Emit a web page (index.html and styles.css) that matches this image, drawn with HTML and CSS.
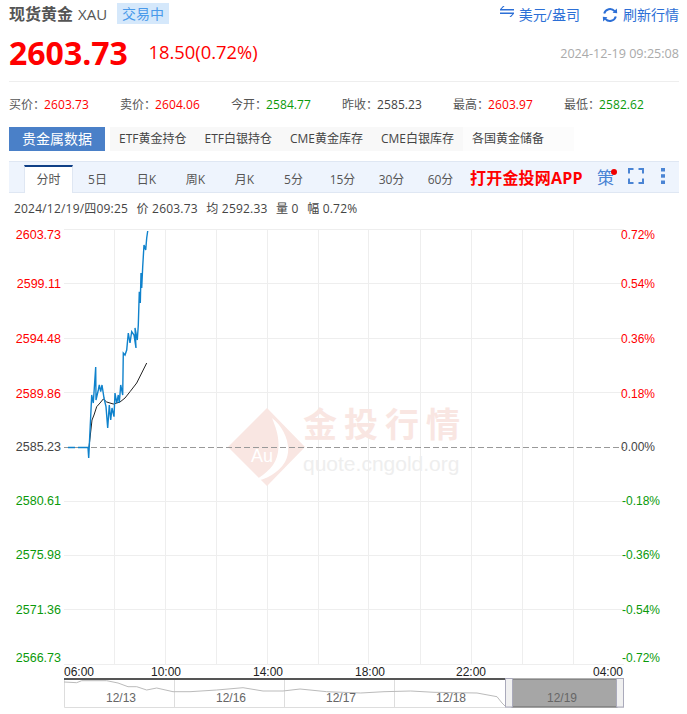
FILE: index.html
```html
<!DOCTYPE html>
<html lang="zh">
<head>
<meta charset="utf-8">
<title>现货黄金 XAU</title>
<link rel="stylesheet" href="styles.css">
</head>
<body>
<div class="page">
  <header class="head">
    <div class="title-row">
      <h1 class="name">现货黄金</h1><span class="code">XAU</span><span class="status">交易中</span>
      <div class="actions">
        <a class="action action-swap"><svg class="ic-swap" viewBox="0 0 14 11"><path d="M4.6 0 L1.6 3 H14 V4.6 H0 V3.2 L3 0 Z M0 6.4 H14 V7.8 L11 11 H9.4 L12.4 8 H0 Z" fill="#2c6fd6"/></svg>美元/盎司</a>
        <a class="action"><svg class="ic-refresh" viewBox="0 0 16 16"><path d="M2.2 6.5 A6 6 0 0 1 12.6 4.2 M13.8 9.5 A6 6 0 0 1 3.4 11.8" fill="none" stroke="#2c6fd6" stroke-width="2"/><path d="M10.6 5.8 L15.2 6.2 L14.8 1.6 Z M5.4 10.2 L0.8 9.8 L1.2 14.4 Z" fill="#2c6fd6"/></svg>刷新行情</a>
      </div>
    </div>
    <div class="price-row">
      <span class="price">2603.73</span><span class="change">18.50(0.72%)</span><time class="stamp">2024-12-19 09:25:08</time>
    </div>
  </header>
  <dl class="quotes">
    <div class="quote"><dt>买价：</dt><dd class="up">2603.73</dd></div>
    <div class="quote"><dt>卖价：</dt><dd class="up">2604.06</dd></div>
    <div class="quote"><dt>今开：</dt><dd class="down">2584.77</dd></div>
    <div class="quote"><dt>昨收：</dt><dd>2585.23</dd></div>
    <div class="quote"><dt>最高：</dt><dd class="up">2603.97</dd></div>
    <div class="quote"><dt>最低：</dt><dd class="down">2582.62</dd></div>
  </dl>
  <nav class="data-tabs">
    <span class="data-main">贵金属数据</span>
    <span class="data-tab">ETF黄金持仓</span>
    <span class="data-tab">ETF白银持仓</span>
    <span class="data-tab">CME黄金库存</span>
    <span class="data-tab">CME白银库存</span>
    <span class="data-tab data-last">各国黄金储备</span>
  </nav>
  <div class="period-bar">
    <span class="period active">分时</span>
    <span class="period">5日</span>
    <span class="period">日K</span>
    <span class="period">周K</span>
    <span class="period">月K</span>
    <span class="period">5分</span>
    <span class="period">15分</span>
    <span class="period">30分</span>
    <span class="period">60分</span>
    <span class="promo">打开金投网APP</span>
    <span class="tool-ce">策<i class="dot"></i></span>
    <svg class="ic-full" viewBox="0 0 16 16"><path d="M1 5.5 V1 H5.5 M10.5 1 H15 V5.5 M15 10.5 V15 H10.5 M5.5 15 H1 V10.5" fill="none" stroke="#4a84d4" stroke-width="2"/></svg>
    <svg class="ic-more" viewBox="0 0 4 16"><rect x="0" y="0" width="4" height="3.5" fill="#4a84d4"/><rect x="0" y="6.2" width="4" height="3.5" fill="#4a84d4"/><rect x="0" y="12.5" width="4" height="3.5" fill="#4a84d4"/></svg>
  </div>
  <div class="info-line">
    <span>2024/12/19/四09:25</span><span>价 2603.73</span><span>均 2592.33</span><span>量 0</span><span>幅 0.72%</span>
  </div>
  <svg class="chart" width="687" height="494" viewBox="0 220 687 494">
    <g class="grid">
      <path d="M64 229.5H624M64 283.5H624M64 338.5H624M64 392.5H624M64 501.5H624M64 555.5H624M64 609.5H624M64 664.5H624"/>
      <path d="M114.5 229V664M165.5 229V664M216.5 229V664M267.5 229V664M318.5 229V664M368.5 229V664M420.5 229V664M471.5 229V664M522.5 229V664M573.5 229V664"/>
    </g>
    <g class="mark">
      <path class="mark-d" d="M267 408 L305 447 L267 486 L228 447Z"/>
      <path class="mark-w" d="M272 418 C285 428 293 448 285 462 C278 474 264 480 252 482 C266 474 276 466 278 452 C280 438 276 428 272 418Z"/>
      <text class="mark-au" x="262" y="462">Au</text>
      <text class="mark-cn" x="303" y="437">金投行情</text>
      <text class="mark-en" x="303" y="471">quote.cngold.org</text>
    </g>
    <path class="zero" d="M64 447.5H624"/>
    <path class="avg" d="M89 447L92 420L94 415L96.7 406.7L100 403L103.3 399L106.7 402L113.3 404L120 402L125 398L130 391.7L136.7 383L141.7 373L146.7 363"/>
    <path class="line" d="M68 447.5H75M78 447.5H85M85 447.5H88L88.7 458L91 410L91.7 395L93.3 403L95.7 367L96 400L98.3 390L99.3 385L100.7 391.7L102 385L104 398L106 406.7L107.7 428L109.3 405L110.7 420L112 408L114 416.7L115 393L116.7 403L118.3 395L119.3 403L120.7 385L122.7 395L123.3 353L125 355L126.7 350L128.3 333L130 343L131.7 331.7L134 335L136 348L135 328L137.3 340L138.3 325L139.3 291.7L140.3 303L141 273L141.7 288L142.7 266.7L143.3 256.7L144 245L145.7 250L146.7 238L147.7 231"/>
    <g class="y-left">
      <text class="up" x="61" y="239">2603.73</text>
      <text class="up" x="61" y="288">2599.11</text>
      <text class="up" x="61" y="343">2594.48</text>
      <text class="up" x="61" y="398">2589.86</text>
      <text x="61" y="451">2585.23</text>
      <text class="down" x="61" y="505">2580.61</text>
      <text class="down" x="61" y="559">2575.98</text>
      <text class="down" x="61" y="614">2571.36</text>
      <text class="down" x="61" y="662">2566.73</text>
    </g>
    <g class="y-right">
      <text class="up" x="621" y="239">0.72%</text>
      <text class="up" x="621" y="288">0.54%</text>
      <text class="up" x="621" y="343">0.36%</text>
      <text class="up" x="621" y="398">0.18%</text>
      <text x="621" y="451">0.00%</text>
      <text class="down" x="660" y="505">-0.18%</text>
      <text class="down" x="660" y="559">-0.36%</text>
      <text class="down" x="660" y="614">-0.54%</text>
      <text class="down" x="660" y="662">-0.72%</text>
    </g>
    <g class="x-axis">
      <text x="64" y="676">06:00</text>
      <text x="151" y="676">10:00</text>
      <text x="253" y="676">14:00</text>
      <text x="355" y="676">18:00</text>
      <text x="456" y="676">22:00</text>
      <text x="593" y="676">04:00</text>
    </g>
    <g class="nav">
      <path class="nav-frame" d="M64.5 680V707.5H624M174.5 680V707M284.5 680V707M394.5 680V707"/>
      <rect class="nav-top" x="64" y="678" width="441" height="2"/>
      <path class="nav-line" d="M64 682L76.7 682.7L81.7 680.7L106.7 680.7L118 683L128 686.7L136.7 686.7L146.7 690L156.7 688L173 691.7L190 691.7L216.7 690L243 687.7L263 691L283 691L300 689L326.7 691.7L360.7 693L384 691.7L410.7 691L434 692.3L477 693L497 696.7L502 703L505.7 706.7"/>
      <rect class="nav-shade" x="512" y="679" width="105" height="28"/>
      <rect class="nav-handle" x="505.5" y="678.5" width="7" height="28.5"/>
      <rect class="nav-handle" x="616.5" y="678.5" width="7" height="28.5"/>
      <g class="nav-dates">
        <text x="121" y="702">12/13</text>
        <text x="231" y="702">12/16</text>
        <text x="341" y="702">12/17</text>
        <text x="451" y="702">12/18</text>
        <text x="562" y="702">12/19</text>
      </g>
    </g>
  </svg>
</div>
</body>
</html>
```
FILE: styles.css
```css
* { box-sizing: border-box; }
html, body { margin: 0; padding: 0; background: #fff; }
body { font-family: "Open Sans", "Noto Sans CJK SC", sans-serif; color: #333; width: 687px; height: 714px; overflow: hidden; }
.page { padding: 0 8px 0 9px; position: relative; }
.head { height: 82px; border-bottom: 1px solid #eee; }
.title-row { display: flex; align-items: center; height: 24px; padding-top: 3px; }
.name { margin: 1px 0 0; font-size: 16px; font-weight: 700; color: #555; line-height: 22px; }
.code { margin: 1px 0 0 5px; font-size: 15px; color: #555; }
.status { margin-left: 10px; background: #d5e8fb; color: #4a9aea; font-size: 14px; height: 21px; line-height: 21px; padding: 0 5px; }
.actions { margin-left: auto; margin-top: 2px; display: flex; align-items: center; }
.action { display: flex; align-items: center; font-size: 14px; line-height: 20px; color: #2c6fd6; }
.action-swap { margin-right: 22px; }
.ic-swap { width: 14px; height: 11px; margin-right: 5px; margin-top: -6px; }
.ic-refresh { width: 16px; height: 16px; margin-right: 5px; }
.price-row { display: flex; align-items: center; height: 57px; }
.price { font-size: 32px; line-height: 40px; font-weight: 700; color: #f00; }
.change { margin-left: 20.5px; font-size: 18.4px; line-height: 24px; color: #f00; margin-top: -2px; }
.stamp { margin-left: auto; font-size: 12.6px; color: #aaa; margin-top: 2px; }
.quotes { display: flex; margin: 0; height: 45px; padding-top: 1px; align-items: center; font-size: 12px; line-height: 16px; }
.quote { display: flex; width: 111px; }
.quotes dt { color: #555; }
.quotes dd { margin: 0 0 0 -1px; color: #444; letter-spacing: 0.1px; }
.up { color: #f00; fill: #f00; }
.down { color: #0a9a0a; fill: #0a9a0a; }
.quotes dd.up { color: #f00; }
.quotes dd.down { color: #0a9a0a; }
.data-tabs { display: flex; height: 24px; font-size: 12px; align-items: stretch; white-space: nowrap; }
.data-main { width: 96px; line-height: 24px; text-align: center; background: #4a80c8; color: #fff; font-size: 14px; margin-right: 5px; }
.data-tab { color: #444; padding: 0 9px; line-height: 24px; background: #f8f8f8; }
.data-last { padding-right: 30px; background: #fcfcfc; }
.period-bar { display: flex; align-items: flex-end; height: 32px; margin-top: 10px; background: #eef4fd; border-top: 1px solid #dfe7f3; border-bottom: 1px solid #dfe7f3; font-size: 12px; color: #555; position: relative; }
.period { width: 49px; text-align: center; line-height: 20px; height: 30px; padding-top: 8px; }
.period.active { margin-left: 15px; height: 28px; padding-top: 3px; background: #fff; border-top: 2px solid #0f3f86; border-left: 1px solid #dfe7f3; border-right: 1px solid #dfe7f3; margin-bottom: -1px; }
.promo { position: absolute; left: 461px; top: 5px; font-size: 16px; line-height: 22px; font-weight: 700; letter-spacing: 0.2px; color: #f00; white-space: nowrap; }
.tool-ce { position: absolute; left: 588px; top: 4px; font-size: 17px; line-height: 24px; color: #4a84d4; }
.dot { position: absolute; right: -3px; top: 3px; width: 6px; height: 6px; border-radius: 50%; background: #e00; }
.ic-full { position: absolute; left: 619px; top: 6px; width: 16px; height: 16px; }
.ic-more { position: absolute; left: 652px; top: 6px; width: 4px; height: 16px; }
.info-line { display: flex; gap: 8.5px; font-size: 12px; letter-spacing: 0.2px; padding-left: 5px; height: 30px; align-items: center; color: #444; }
.chart { display: block; position: absolute; left: 0; top: 220px; font-family: "Liberation Sans", sans-serif; }
.grid path { fill: none; stroke: #eee; stroke-width: 1; }
.mark-d { fill: #f9e6e2; }
.mark-w { fill: #fff; }
.mark-au { fill: #fff; font-size: 18px; text-anchor: middle; }
.mark-cn { fill: #f9e6e2; font-family: "Noto Sans CJK SC", sans-serif; font-weight: 700; font-size: 34px; letter-spacing: 7px; }
.mark-en { fill: #eee; font-size: 21px; }
.zero { stroke: #999; stroke-dasharray: 6 3; fill: none; }
.avg { fill: none; stroke: #222; stroke-width: 1; }
.line { fill: none; stroke: #0f82cc; stroke-width: 1.4; }
.y-left text { font-size: 12.5px; text-anchor: end; }
.y-right text { font-size: 12px; text-anchor: start; }
.y-right text.down { text-anchor: end; }
.y-left text, .y-right text { fill: #444; }
.y-left text.up, .y-right text.up { fill: #f00; }
.y-left text.down, .y-right text.down { fill: #0a9a0a; }
.x-axis text { font-size: 12px; fill: #222; }
.nav-frame { fill: none; stroke: #ddd; }
.nav-top { fill: #555; }
.nav-line { fill: none; stroke: #bbb; }
.nav-shade { fill: #a6a6a6; stroke: #666; }
.nav-handle { fill: #f0f0f0; stroke: #aab; }
.nav-dates text { font-size: 12px; fill: #666; text-anchor: middle; }
```
